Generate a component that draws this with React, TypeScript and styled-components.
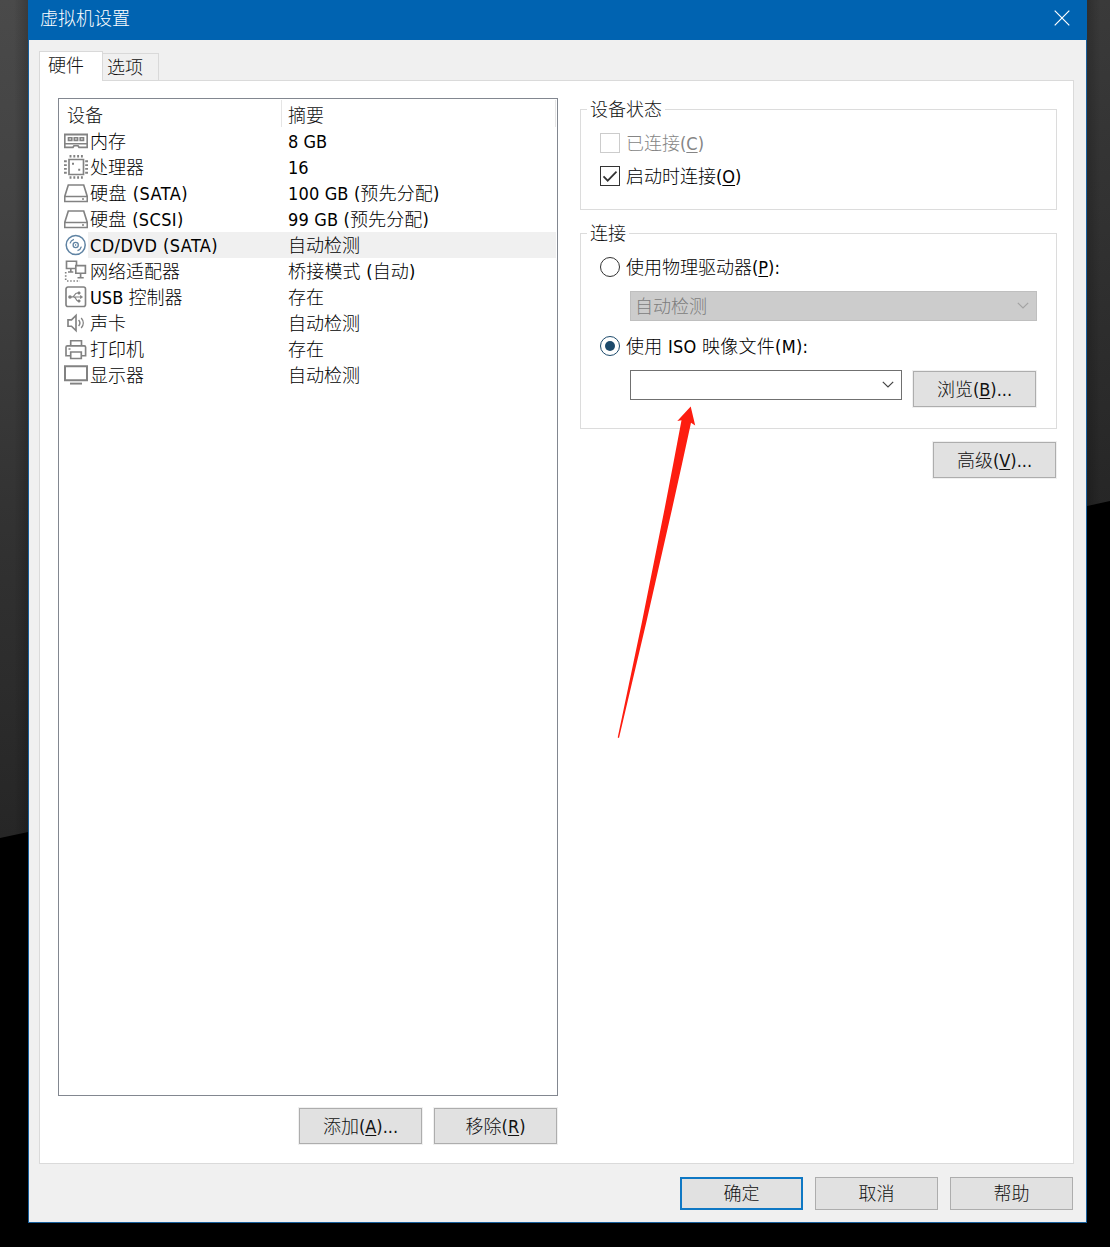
import React from "react";
import styled, { createGlobalStyle, css } from "styled-components";

const GlobalStyle = createGlobalStyle`
  * { box-sizing: border-box; }
  html, body { margin: 0; padding: 0; background: #000; }
  body {
    font-family: "DejaVu Sans Condensed", "DejaVu Sans", "Noto Sans CJK SC", sans-serif;
    font-stretch: condensed;
    font-size: 18px;
    font-weight: 300;
    line-height: 20px;
    color: #111;
  }
`;

const Desktop = styled.div`
  position: relative;
  display: grid;
  grid-template-columns: 28px 1059px 23px;
  width: 1110px;
  height: 1247px;
  background: #000;
  overflow: hidden;
`;

const Backdrop = styled.div<{ $side: "left" | "right" }>`
  ${(p) =>
    p.$side === "left"
      ? css`
          height: 838px;
          background: linear-gradient(90deg, transparent 50%, rgba(0, 0, 0, 0.2)),
            linear-gradient(#4a4a4a, #424242 25%, #333 60%, #262626);
          clip-path: polygon(0 0, 100% 0, 100% 832px, 0 838px);
        `
      : css`
          height: 508px;
          background: linear-gradient(90deg, rgba(0, 0, 0, 0.2), transparent 60%),
            linear-gradient(#3a3a3a, #303030 50%, #262626);
          clip-path: polygon(0 0, 100% 0, 100% 501px, 0 506px);
        `}
`;

const Dialog = styled.div`
  display: flex;
  flex-direction: column;
  height: 1223px;
  background: #f0f0f0;
  border: 1px solid #185f9c;
  border-top: 0;
`;

const TitleBar = styled.header`
  display: flex;
  flex: none;
  justify-content: space-between;
  align-items: center;
  height: 40px;
  margin: 0 -1px;
  padding: 0 17px 4px 12px;
  background: #0063b1;
  color: #fff;
  font-family: "Noto Sans CJK SC", sans-serif;
`;

const Title = styled.span`
  padding-bottom: 3px;
`;

const Tabs = styled.nav`
  display: flex;
  align-items: flex-end;
  flex: none;
  height: 41px;
  padding: 11px 10px 0;
  margin-bottom: -1px;
`;

const Tab = styled.div<{ $active?: boolean }>`
  position: relative;
  border: 1px solid #d9d9d9;
  ${(p) =>
    p.$active
      ? css`
          z-index: 1;
          width: 64px;
          height: 30px;
          padding: 4px 0 0 8px;
          background: #fff;
          border-bottom: 0;
        `
      : css`
          width: 57px;
          height: 28px;
          margin-left: -1px;
          padding: 4px 0 0 5px;
          border-left: 0;
        `}
`;

const Panel = styled.main`
  display: flex;
  flex: none;
  gap: 22px;
  width: 1035px;
  height: 1084px;
  margin-left: 10px;
  padding: 17px 16px 18px 18px;
  background: #fff;
  border: 1px solid #dadada;
`;

const DeviceColumn = styled.section`
  display: flex;
  flex-direction: column;
  width: 500px;
  gap: 12px;
`;

const List = styled.div`
  height: 998px;
  border: 1px solid #828790;
  background: #fff;
`;

const ListHeader = styled.div`
  display: grid;
  grid-template-columns: 222px 1fr;
  height: 29px;
  padding: 1px 1px 1px 0;
`;

const HeaderCell = styled.div<{ $first?: boolean }>`
  padding: 6px 0 0 ${(p) => (p.$first ? 8 : 7)}px;
  border-right: 1px solid #e5e5e5;
  ${(p) => p.$first && "margin-right: -1px;"}
`;

const Row = styled.div`
  display: flex;
  height: 26px;
  padding-left: 5px;
`;

const RowBody = styled.div<{ $selected?: boolean }>`
  display: grid;
  grid-template-columns: 198px 1fr;
  flex: 1;
  align-items: center;
  padding: 1px 0 0 2px;
  margin-right: 1px;
  background: ${(p) => (p.$selected ? "#f0f0f0" : "transparent")};
  color: #000;
  white-space: nowrap;
`;

const Cell = styled.span<{ $spacing?: number }>`
  letter-spacing: ${(p) => p.$spacing ?? 0}px;
`;

const DeviceIcon = styled.svg<{ $tint?: string }>`
  flex: none;
  width: 24px;
  height: 26px;
  fill: none;
  stroke: ${(p) => p.$tint ?? "#828282"};
  stroke-width: 1.65;
`;

const ButtonRow = styled.div<{ $footer?: boolean }>`
  display: flex;
  justify-content: flex-end;
  gap: 12px;
  padding: ${(p) => (p.$footer ? "13px 13px 0 0" : "0 1px 0 0")};
`;

const Button = styled.button<{ $primary?: boolean; $short?: boolean }>`
  flex: none;
  width: 123px;
  height: ${(p) => (p.$short ? 33 : 36)}px;
  padding: 1px 0 0;
  border: ${(p) => (p.$primary ? "2px solid #0f78c4" : "1px solid #adadad")};
  background: #e1e1e1;
  box-shadow: 0 0 0 1px #f0f0f0;
  color: #111;
  font: inherit;
  line-height: 20px;
  white-space: nowrap;
`;

const Key = styled.span`
  text-decoration: underline;
  text-decoration-thickness: 1px;
  text-underline-offset: 2px;
`;

const Settings = styled.section`
  display: flex;
  flex-direction: column;
  width: 477px;
  padding-top: 1px;
`;

const Group = styled.fieldset<{ $height: number }>`
  flex: none;
  height: ${(p) => p.$height}px;
  min-width: 0;
  margin: 0 0 13px;
  padding: 0 19px;
  border: 1px solid #dcdcdc;
`;

const Legend = styled.legend`
  height: 20px;
  margin-left: -13px;
  padding: 1px 3px 0;
`;

const Options = styled.div<{ $gap: number }>`
  display: flex;
  flex-direction: column;
  gap: ${(p) => p.$gap}px;
  padding-top: 14px;
`;

const Option = styled.label<{ $disabled?: boolean }>`
  display: flex;
  align-items: center;
  gap: 6px;
  height: 20px;
  color: ${(p) => (p.$disabled ? "#858585" : "#000")};
  white-space: nowrap;
`;

const OptionText = styled.span<{ $spacing?: number }>`
  padding-top: 2px;
  letter-spacing: ${(p) => p.$spacing ?? 0}px;
`;

const CheckBox = styled.span<{ $disabled?: boolean }>`
  display: flex;
  flex: none;
  width: 20px;
  height: 20px;
  border: 1px solid ${(p) => (p.$disabled ? "#ccc" : "#333")};
`;

const Radio = styled.span<{ $on?: boolean }>`
  display: grid;
  place-items: center;
  flex: none;
  width: 20px;
  height: 20px;
  border: 1px solid ${(p) => (p.$on ? "#1d4a6b" : "#333")};
  border-radius: 50%;
  &::after {
    content: "";
    width: 10px;
    height: 10px;
    border-radius: 50%;
    background: ${(p) => (p.$on ? "#1d4a6b" : "transparent")};
  }
`;

const Fields = styled.div`
  display: flex;
  gap: 11px;
  padding-left: 30px;
`;

const Select = styled.div<{ $width: number; $disabled?: boolean }>`
  display: flex;
  flex: none;
  justify-content: space-between;
  align-items: center;
  width: ${(p) => p.$width}px;
  height: 30px;
  padding: 0 7px 0 4px;
  border: 1px solid ${(p) => (p.$disabled ? "#bfbfbf" : "#707070")};
  background: ${(p) => (p.$disabled ? "#ccc" : "#fff")};
  color: #7c7c7c;
`;

const SelectText = styled.span`
  padding-top: 2px;
`;

const Browse = styled.div`
  padding-top: 1px;
  height: 30px;
`;

const Arrow = styled.svg`
  position: absolute;
  left: 610px;
  top: 400px;
  pointer-events: none;
`;

function Chevron({ color }: { color: string }) {
  return (
    <svg width="12" height="12" viewBox="0 0 12 12" fill="none" stroke={color} strokeWidth="1.2">
      <path d="M.8 2.8 6 8l5.200-5.200" />
    </svg>
  );
}

const drive = (
  <>
    <path d="M4.300 5h15.400L23.300 16.500H.7Z M.7 16.500v5h22.600v-5" />
    <path d="M18 19h2" />
  </>
);

const icons: Record<string, React.ReactNode> = {
  memory: (
    <>
      <path d="M0 6.500h24" strokeWidth="2" />
      <path d="M.8 6v13.300h8.200l1-1.600h4l1 1.600h8.200V6M1 15.700h22" />
      <path d="M4.500 9.700h3.300v2.600H4.500zM10.300 9.700h3.300v2.600h-3.300zM16.200 9.700h3.300v2.600h-3.300z" />
    </>
  ),
  cpu: (
    <>
      <path d="M5 5.500h14.500v15H5z" />
      <path d="M6.500 1v2.500M10.300 1v2.500M14.100 1v2.500M17.900 1v2.500M6.500 22.300v2.500M10.300 22.300v2.500M14.100 22.300v2.500M17.900 22.300v2.500M0 7.300h2.800M0 11.100h2.800M0 14.900h2.800M0 18.700h2.800M21.200 7.300H24M21.200 11.100H24M21.200 14.900H24M21.200 18.700H24" strokeWidth="1.900" />
      <path d="M8 9.700h2M14.200 15.700h2" strokeWidth="2" />
    </>
  ),
  drive,
  disc: (
    <>
      <circle cx="11.700" cy="13" r="9.500" strokeWidth="1.500" />
      <circle cx="11.700" cy="13" r="2.600" strokeWidth="1.300" />
      <circle cx="11.700" cy="13" r=".4" strokeWidth="1" />
      <path d="M6 11.400a6 6 0 0 1 3.900-4.100M17.400 14.600a6 6 0 0 1-3.900 4.100" strokeWidth="1.300" />
    </>
  ),
  network: (
    <>
      <path d="M11.500 10.500H2.500V3.200h10V7M6.800 10.500v3.300M4 14h5.300" />
      <path d="M11.800 7.600h9.600v7.600h-9.600zM16.600 15.200v4.300M13.500 19.700h6.200" />
      <path d="M1.700 14v9.300M3 23h13" strokeDasharray="1.500 1.700" />
    </>
  ),
  usb: (
    <>
      <rect x="2" y="3" width="19.500" height="19.500" rx="2" />
      <path d="M6 13h12M8 13c3 0 2.200-4 5.200-4H14M9.500 13c3 0 2 4 4.700 4" strokeWidth="1.200" />
      <circle cx="6" cy="13" r="1" fill="#828282" />
      <path d="M14 8h2v2h-2zM14 16h2v2h-2zM16.500 11.500 18.500 13l-2 1.500z" strokeWidth=".8" fill="#828282" />
    </>
  ),
  sound: (
    <>
      <path d="M4 9.800h3.500L12 5.500v15l-4.500-4.300H4z" />
      <path d="M14.600 10c1.600 1.800 1.600 4.200 0 6M17.200 8c2.700 3 2.700 7 0 10" strokeWidth="1.400" />
    </>
  ),
  printer: (
    <>
      <path d="M6.700 10V4.700h10.800V10M6.500 19.700H2V11.200q0-1.400 1.400-1.400h16.800q1.400 0 1.400 1.400v8.500h-4.300" />
      <path d="M6.700 16h10.600v6.500H6.700zM4.500 13h2" />
    </>
  ),
  display: (
    <>
      <path d="M1 4.300h22v14H1z" strokeWidth="2" />
      <path d="M6 21.600h12" strokeWidth="1.900" />
    </>
  ),
};

const devices = [
  { icon: "memory", name: "内存", summary: "8 GB" },
  { icon: "cpu", name: "处理器", summary: "16" },
  { icon: "drive", name: "硬盘 (SATA)", nameSpacing: 0.5, summary: "100 GB (预先分配)", summarySpacing: 0.15 },
  { icon: "drive", name: "硬盘 (SCSI)", nameSpacing: 0.35, summary: "99 GB (预先分配)", summarySpacing: 0.15 },
  { icon: "disc", name: "CD/DVD (SATA)", nameSpacing: 0.42, summary: "自动检测", selected: true },
  { icon: "network", name: "网络适配器", summary: "桥接模式 (自动)", summarySpacing: 0.2 },
  { icon: "usb", name: "USB 控制器", summary: "存在" },
  { icon: "sound", name: "声卡", summary: "自动检测" },
  { icon: "printer", name: "打印机", summary: "存在" },
  { icon: "display", name: "显示器", summary: "自动检测" },
];

export default function App() {
  return (
    <>
      <GlobalStyle />
      <Desktop>
        <Backdrop $side="left" />
        <Dialog>
          <TitleBar>
            <Title>虚拟机设置</Title>
            <svg width="16" height="16" viewBox="0 0 16 16" stroke="#fff" strokeWidth="1.200">
              <path d="M.7.7l14.600 14.600M15.300.7.7 15.300" />
            </svg>
          </TitleBar>
          <Tabs>
            <Tab $active>硬件</Tab>
            <Tab>选项</Tab>
          </Tabs>
          <Panel>
            <DeviceColumn>
              <List>
                <ListHeader>
                  <HeaderCell $first>设备</HeaderCell>
                  <HeaderCell>摘要</HeaderCell>
                </ListHeader>
                {devices.map((d, i) => (
                  <Row key={i}>
                    <DeviceIcon viewBox="0 0 24 26" $tint={d.icon === "disc" ? "#5f83a3" : undefined}>
                      {icons[d.icon]}
                    </DeviceIcon>
                    <RowBody $selected={d.selected}>
                      <Cell $spacing={d.nameSpacing}>{d.name}</Cell>
                      <Cell $spacing={d.summarySpacing}>{d.summary}</Cell>
                    </RowBody>
                  </Row>
                ))}
              </List>
              <ButtonRow>
                <Button>添加(<Key>A</Key>)...</Button>
                <Button>移除(<Key>R</Key>)</Button>
              </ButtonRow>
            </DeviceColumn>
            <Settings>
              <Group $height={111}>
                <Legend>设备状态</Legend>
                <Options $gap={13}>
                  <Option $disabled>
                    <CheckBox $disabled />
                    <OptionText>已连接(<Key>C</Key>)</OptionText>
                  </Option>
                  <Option>
                    <CheckBox>
                      <svg width="18" height="18" viewBox="0 0 18 18" fill="none" stroke="#333" strokeWidth="1.700">
                        <path d="M2.500 9.300 6.700 13.700 15.500 4.700" />
                      </svg>
                    </CheckBox>
                    <OptionText>启动时连接(<Key>O</Key>)</OptionText>
                  </Option>
                </Options>
              </Group>
              <Group $height={206}>
                <Legend>连接</Legend>
                <Options $gap={14}>
                  <Option>
                    <Radio />
                    <OptionText>使用物理驱动器(<Key>P</Key>):</OptionText>
                  </Option>
                  <Fields>
                    <Select $width={407} $disabled>
                      <SelectText>自动检测</SelectText>
                      <Chevron color="#a3a3a3" />
                    </Select>
                  </Fields>
                  <Options $gap={14} style={{ paddingTop: 1 }}>
                    <Option>
                      <Radio $on />
                      <OptionText $spacing={0.27}>使用 ISO 映像文件(M):</OptionText>
                    </Option>
                    <Fields>
                      <Select $width={272}>
                        <span />
                        <Chevron color="#444" />
                      </Select>
                      <Browse>
                        <Button>浏览(<Key>B</Key>)...</Button>
                      </Browse>
                    </Fields>
                  </Options>
                </Options>
              </Group>
              <ButtonRow>
                <Button>高级(<Key>V</Key>)...</Button>
              </ButtonRow>
            </Settings>
          </Panel>
          <ButtonRow $footer>
            <Button $short $primary>确定</Button>
            <Button $short>取消</Button>
            <Button $short>帮助</Button>
          </ButtonRow>
        </Dialog>
        <Backdrop $side="right" />
        <Arrow width="100" height="345" viewBox="610 400 100 345">
          <path d="M690.700 406.500 677.300 421 681.500 420.300Q652 578 617.700 737.500L619 738Q657 580 691 422.700L695.200 425.500Z" fill="#fd1d10" />
        </Arrow>
      </Desktop>
    </>
  );
}
